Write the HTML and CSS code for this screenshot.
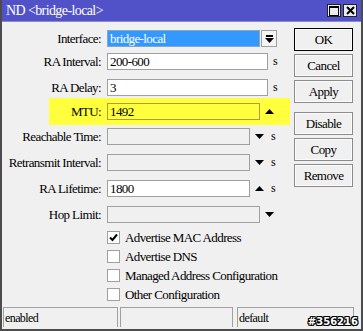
FILE: index.html
```html
<!DOCTYPE html>
<html lang="en">
<head>
    <meta charset="UTF-8">
    <title>ND &lt;bridge-local&gt;</title>
    <link rel="stylesheet" href="styles.css">
</head>
<body>
    <div class="window">
        <div class="titlebar">
            <span class="title">ND &lt;bridge-local&gt;</span>
            <div class="tbtns">
                <span class="tbtn"><svg width="10" height="10" viewBox="0 0 10 10"><rect x="0.5" y="0.5" width="9" height="9" fill="none" stroke="#000"/><rect x="0" y="0" width="10" height="2" fill="#000"/></svg></span>
                <span class="tbtn"><svg width="9" height="9" viewBox="0 0 9 9"><path d="M1 1l7 7M8 1l-7 7" stroke="#000" stroke-width="2"/></svg></span>
            </div>
        </div>

        <div class="main">
            <div class="form">
                <div class="row">
                    <span class="lbl">Interface:</span>
                    <span class="inp w-mid sel">bridge-local</span>
                    <span class="dd"><svg width="9" height="8" viewBox="0 0 9 8"><rect x="1" y="0" width="7" height="2" fill="#000"/><path d="M0 3h9L4.5 8z" fill="#000"/></svg></span>
                </div>
                <div class="row gap6">
                    <span class="lbl">RA Interval:</span>
                    <span class="inp w-full">200-600</span>
                    <span class="unit">s</span>
                </div>
                <div class="row">
                    <span class="lbl">RA Delay:</span>
                    <span class="inp w-full">3</span>
                    <span class="unit">s</span>
                </div>
                <div class="row hl">
                    <span class="lbl">MTU:</span>
                    <span class="inp w-mid yellow">1492</span>
                    <span class="arr"><svg width="9" height="5" viewBox="0 0 9 5"><path d="M0 5h9L4.5 0z"/></svg></span>
                </div>
                <div class="row gap3">
                    <span class="lbl">Reachable Time:</span>
                    <span class="inp w-short off"></span>
                    <span class="arr"><svg width="9" height="5" viewBox="0 0 9 5"><path d="M0 0h9L4.5 5z"/></svg></span>
                    <span class="unit">s</span>
                </div>
                <div class="row">
                    <span class="lbl">Retransmit Interval:</span>
                    <span class="inp w-short off"></span>
                    <span class="arr"><svg width="9" height="5" viewBox="0 0 9 5"><path d="M0 0h9L4.5 5z"/></svg></span>
                    <span class="unit">s</span>
                </div>
                <div class="row">
                    <span class="lbl">RA Lifetime:</span>
                    <span class="inp w-short">1800</span>
                    <span class="arr"><svg width="9" height="5" viewBox="0 0 9 5"><path d="M0 5h9L4.5 0z"/></svg></span>
                    <span class="unit">s</span>
                </div>
                <div class="row">
                    <span class="lbl">Hop Limit:</span>
                    <span class="inp w-mid off"></span>
                    <span class="arr"><svg width="9" height="5" viewBox="0 0 9 5"><path d="M0 0h9L4.5 5z"/></svg></span>
                </div>

                <div class="checks">
                    <div class="check"><span class="box"><svg width="11" height="11" viewBox="0 0 11 11"><path d="M2 5.5l2.5 2.5 4.5-5.5" fill="none" stroke="#000" stroke-width="2"/></svg></span>Advertise MAC Address</div>
                    <div class="check"><span class="box"></span>Advertise DNS</div>
                    <div class="check"><span class="box"></span>Managed Address Configuration</div>
                    <div class="check"><span class="box"></span>Other Configuration</div>
                </div>
            </div>

            <div class="buttons">
                <span class="btn default">OK</span>
                <span class="btn">Cancel</span>
                <span class="btn">Apply</span>
                <span class="btn sep">Disable</span>
                <span class="btn">Copy</span>
                <span class="btn">Remove</span>
            </div>
        </div>

        <div class="status">
            <span class="cell c1">enabled</span>
            <span class="cell c2"></span>
            <span class="cell c3">default</span>
        </div>

        <div class="tag">#356216</div>
    </div>
</body>
</html>
```

FILE: styles.css
```css
body {
    margin: 0;
    font-family: "Liberation Serif", "Times New Roman", "DejaVu Serif", serif;
    font-size: 13px;
    letter-spacing: -0.6px;
    color: #000;
}
.window {
    position: relative;
    width: 363px;
    height: 331px;
    box-sizing: border-box;
    border: 2px solid #4c4c4c;
    border-top: none;
    background: #f0f0f0;
    display: flex;
    flex-direction: column;
}
.titlebar {
    height: 22px;
    flex-shrink: 0;
    background: #5252c8;
    color: #fff;
    display: flex;
    align-items: center;
    padding: 0 4px 0 4px;
    border-bottom: 1px solid #8a8ad8;
    box-sizing: border-box;
}
.title {
    flex: 1;
    font-size: 14px;
}
.tbtns {
    display: flex;
    gap: 2px;
}
.tbtn {
    width: 14px;
    height: 13px;
    box-sizing: border-box;
    border: 1px solid #222;
    background: #ececec;
    display: flex;
    align-items: center;
    justify-content: center;
}
.main {
    display: flex;
    flex: 1;
}
.form {
    width: 292px;
    padding-top: 8px;
    display: flex;
    flex-direction: column;
}
.row {
    display: flex;
    align-items: center;
    height: 17px;
    margin-top: 9px;
}
.row:first-child {
    margin-top: 0;
}
.row.gap6 {
    margin-top: 6px;
}
.row.gap3 {
    margin-top: 3px;
}
.row.hl {
    margin: 2px 0 0 47px;
    width: 241px;
    padding: 5px 0;
    background: #ffff3e;
}
.lbl {
    width: 99px;
    text-align: right;
    margin-right: 6px;
    white-space: nowrap;
}
.row.hl .lbl {
    width: 52px;
}
.inp {
    height: 17px;
    box-sizing: border-box;
    border: 1px solid #a0a0a0;
    background: #fff;
    padding: 0 2px;
    line-height: 15px;
    white-space: nowrap;
}
.w-full { width: 161px; }
.w-mid { width: 153px; }
.w-short { width: 143px; }
.inp.sel {
    background: #3399ff;
    color: #fff;
    border-color: #8aa4c4;
}
.inp.yellow {
    background: #ffff3e;
    border-color: #a8a040;
}
.inp.off {
    background: #f0f0f0;
}
.dd {
    width: 16px;
    height: 17px;
    box-sizing: border-box;
    margin-left: 1px;
    border: 1px solid #a0a0a0;
    background: #f4f4f4;
    display: flex;
    align-items: center;
    justify-content: center;
}
.unit {
    margin-left: 5px;
    font-size: 12px;
}
.arr {
    margin-left: 5px;
    display: flex;
}
.arr + .unit {
    margin-left: 7px;
}
.checks {
    margin: 5px 0 0 105px;
}
.check {
    height: 19px;
    display: flex;
    align-items: center;
    white-space: nowrap;
}
.box {
    width: 13px;
    height: 13px;
    box-sizing: border-box;
    border: 1px solid #a0a0a0;
    background: #fff;
    margin-right: 5px;
    display: flex;
    align-items: center;
    justify-content: center;
}
.buttons {
    width: 59px;
    padding-top: 6px;
    display: flex;
    flex-direction: column;
    gap: 3px;
}
.btn {
    height: 23px;
    box-sizing: border-box;
    border: 1px solid #8c8c8c;
    box-shadow: inset 0 0 0 1px #fbfbfb;
    background: #f0f0f0;
    display: flex;
    align-items: center;
    justify-content: center;
}
.btn.default {
    border-color: #000;
}
.btn.sep {
    margin-top: 6px;
}
.status {
    display: flex;
    height: 20px;
    margin: 0 0 2px 1px;
    font-size: 12px;
}
.cell {
    box-sizing: border-box;
    border: 1px solid #a0a0a0;
    border-bottom: none;
    padding: 3px 1px 0;
}
.c1 { width: 115px; }
.c2 { width: 113px; margin-left: 2px; }
.c3 { width: 117px; margin-left: 4px; }
.tag {
    position: absolute;
    right: 3px;
    bottom: 2px;
    font-family: "DejaVu Sans", sans-serif;
    font-weight: bold;
    font-size: 10px;
    letter-spacing: 0;
    color: #fff;
    text-shadow: 1px 0 #000, -1px 0 #000, 0 1px #000, 0 -1px #000, 1px 1px #000, -1px -1px #000, 1px -1px #000, -1px 1px #000;
}
```
